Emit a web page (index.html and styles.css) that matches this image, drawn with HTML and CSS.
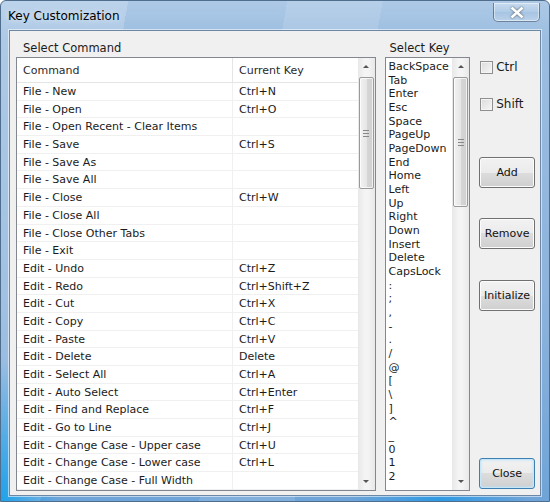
FILE: index.html
```html
<!DOCTYPE html>
<html>
<head>
<meta charset="utf-8">
<link rel="stylesheet" href="styles.css">
</head>
<body>
<div class="window">
  <div class="titlebar">
    <span class="title">Key Customization</span>
    <div class="closebtn">
      <svg width="14" height="11" viewBox="0 0 14 11"><path d="M2.5 1.5 L11.5 9.5 M11.5 1.5 L2.5 9.5" stroke="#fff" stroke-width="2.6" stroke-linecap="square"/></svg>
    </div>
  </div>
  <div class="client">
    <div class="cmd-col">
      <div class="label cmd-label">Select Command</div>
      <div class="listview">
        <div class="lv-body">
          <div class="lv-row lv-head"><div class="c1">Command</div><div class="c2">Current Key</div></div>
          <div class="lv-row"><div class="c1">File - New</div><div class="c2">Ctrl+N</div></div>
          <div class="lv-row"><div class="c1">File - Open</div><div class="c2">Ctrl+O</div></div>
          <div class="lv-row"><div class="c1">File - Open Recent - Clear Items</div><div class="c2"></div></div>
          <div class="lv-row"><div class="c1">File - Save</div><div class="c2">Ctrl+S</div></div>
          <div class="lv-row"><div class="c1">File - Save As</div><div class="c2"></div></div>
          <div class="lv-row"><div class="c1">File - Save All</div><div class="c2"></div></div>
          <div class="lv-row"><div class="c1">File - Close</div><div class="c2">Ctrl+W</div></div>
          <div class="lv-row"><div class="c1">File - Close All</div><div class="c2"></div></div>
          <div class="lv-row"><div class="c1">File - Close Other Tabs</div><div class="c2"></div></div>
          <div class="lv-row"><div class="c1">File - Exit</div><div class="c2"></div></div>
          <div class="lv-row"><div class="c1">Edit - Undo</div><div class="c2">Ctrl+Z</div></div>
          <div class="lv-row"><div class="c1">Edit - Redo</div><div class="c2">Ctrl+Shift+Z</div></div>
          <div class="lv-row"><div class="c1">Edit - Cut</div><div class="c2">Ctrl+X</div></div>
          <div class="lv-row"><div class="c1">Edit - Copy</div><div class="c2">Ctrl+C</div></div>
          <div class="lv-row"><div class="c1">Edit - Paste</div><div class="c2">Ctrl+V</div></div>
          <div class="lv-row"><div class="c1">Edit - Delete</div><div class="c2">Delete</div></div>
          <div class="lv-row"><div class="c1">Edit - Select All</div><div class="c2">Ctrl+A</div></div>
          <div class="lv-row"><div class="c1">Edit - Auto Select</div><div class="c2">Ctrl+Enter</div></div>
          <div class="lv-row"><div class="c1">Edit - Find and Replace</div><div class="c2">Ctrl+F</div></div>
          <div class="lv-row"><div class="c1">Edit - Go to Line</div><div class="c2">Ctrl+J</div></div>
          <div class="lv-row"><div class="c1">Edit - Change Case - Upper case</div><div class="c2">Ctrl+U</div></div>
          <div class="lv-row"><div class="c1">Edit - Change Case - Lower case</div><div class="c2">Ctrl+L</div></div>
          <div class="lv-row"><div class="c1">Edit - Change Case - Full Width</div><div class="c2"></div></div>
        </div>
        <div class="vscroll">
          <div class="arrow up"></div>
          <div class="track">
            <div class="thumb thumb-cmd"><span class="grip"></span></div>
          </div>
          <div class="arrow down"></div>
        </div>
      </div>
    </div>
    <div class="key-col">
      <div class="label key-label">Select Key</div>
      <div class="listbox">
        <div class="lb-body">
          <div>BackSpace</div><div>Tab</div><div>Enter</div><div>Esc</div><div>Space</div>
          <div>PageUp</div><div>PageDown</div><div>End</div><div>Home</div><div>Left</div>
          <div>Up</div><div>Right</div><div>Down</div><div>Insert</div><div>Delete</div>
          <div>CapsLock</div><div>:</div><div>;</div><div>,</div><div>-</div>
          <div>.</div><div>/</div><div>@</div><div>[</div><div>\</div>
          <div>]</div><div>^</div><div>_</div><div>0</div><div>1</div><div>2</div>
        </div>
        <div class="vscroll">
          <div class="arrow up"></div>
          <div class="track">
            <div class="thumb thumb-key"><span class="grip"></span></div>
          </div>
          <div class="arrow down"></div>
        </div>
      </div>
    </div>
    <div class="opt-col">
      <label class="check check-ctrl"><span class="box"></span><span>Ctrl</span></label>
      <label class="check check-shift"><span class="box"></span><span>Shift</span></label>
      <div class="btn btn-add">Add</div>
      <div class="btn btn-remove">Remove</div>
      <div class="btn btn-init">Initialize</div>
      <div class="btn btn-close">Close</div>
    </div>
  </div>
</div>
</body>
</html>
```

FILE: styles.css
```css
* { box-sizing: border-box; }
html, body { margin: 0; padding: 0; }
body {
  width: 550px;
  height: 502px;
  overflow: hidden;
  font-family: "DejaVu Sans", "Liberation Sans", sans-serif;
  font-size: 11px;
  color: #1b1b1b;
  background: #ffffff;
}
.window {
  width: 550px;
  height: 502px;
  display: flex;
  flex-direction: column;
  padding: 0 8px 10px 8px;
  border: 1px solid #4f6d8c;
  border-radius: 6px 6px 0 0;
  background:
    radial-gradient(ellipse 60px 140px at 0% 100%, rgba(20,160,235,0.9), rgba(20,160,235,0) 100%),
    radial-gradient(ellipse 90px 70px at 80% 100%, rgba(30,150,230,0.8), rgba(30,150,230,0) 100%),
    linear-gradient(100deg, rgba(255,255,255,0.18) 0 20%, rgba(255,255,255,0) 20% 45%, rgba(255,255,255,0.12) 45% 60%, rgba(255,255,255,0) 60%),
    linear-gradient(to bottom, #adc9e6 0%, #9bbde0 8%, #8db3dc 60%, #6fa4d8 100%);
}
.titlebar {
  height: 29px;
  flex: none;
  display: flex;
  align-items: flex-start;
  justify-content: space-between;
}
.title {
  margin-top: 8px;
  margin-left: -1px;
  font-size: 12px;
  color: #000;
  text-shadow: 0 0 6px rgba(255,255,255,0.9);
}
.closebtn {
  width: 47px;
  height: 19px;
  margin-top: 2px;
  margin-right: 1px;
  border: 1px solid rgba(40,60,90,0.55);
  border-top: none;
  border-radius: 0 0 5px 5px;
  box-shadow: inset 0 0 0 1px rgba(255,255,255,0.45);
  background: linear-gradient(to bottom, rgba(255,255,255,0.35), rgba(255,255,255,0.1) 50%, rgba(160,190,220,0.2) 51%, rgba(255,255,255,0.25));
  display: flex;
  align-items: center;
  justify-content: center;
}
.closebtn svg { filter: drop-shadow(0 0 1px rgba(0,0,0,0.6)); }

.client {
  flex: 1;
  display: flex;
  background: #f0f0f0;
  border: 1px solid #6d87a4;
  box-shadow: 0 0 0 1px rgba(255,255,255,0.55);
  padding: 8px 5px 4px 6px;
}
.label {
  height: 17px;
  padding-top: 1px;
  line-height: 16px;
  font-size: 11.5px;
  margin-bottom: 1px;
}
.cmd-col { width: 361px; display: flex; flex-direction: column; }
.cmd-label { padding-left: 7px; }
.key-col { width: 86px; margin-left: 9px; display: flex; flex-direction: column; }
.key-label { padding-left: 5px; }

.listview, .listbox {
  flex: 1;
  display: flex;
  background: #fff;
  border: 1px solid #828790;
  overflow: hidden;
  min-height: 0;
}
.lv-body { flex: 1; overflow: hidden; }
.lv-row {
  display: grid;
  grid-template-columns: 216px 1fr;
  height: 17.7px;
  line-height: 17.7px;
  border-bottom: 1px solid #f0f0f0;
  white-space: nowrap;
}
.lv-row .c1 { padding-left: 6px; border-right: 1px solid #f0f0f0; overflow: hidden; }
.lv-row .c2 { padding-left: 6px; }
.lv-head {
  height: 25px;
  line-height: 26px;
  border-bottom: 1px solid #e5e5e5;
  color: #2a2a2a;
}
.lv-head .c1 { border-right: 1px solid #e5e5e5; }

.lb-body {
  flex: 1;
  overflow: hidden;
  padding: 2px 0 0 3px;
  font-size: 11px;
  line-height: 13.67px;
  white-space: nowrap;
}

.vscroll {
  width: 17px;
  flex: none;
  display: flex;
  flex-direction: column;
  background: linear-gradient(to right, #e8e8e8, #f4f4f4 40%, #f4f4f4 60%, #e8e8e8);
}
.arrow {
  height: 17px;
  flex: none;
  display: flex;
  align-items: center;
  justify-content: center;
}
.arrow::before {
  content: "";
  width: 0; height: 0;
  border-left: 3px solid transparent;
  border-right: 3px solid transparent;
}
.arrow.up::before { border-bottom: 3px solid #555; }
.arrow.down::before { border-top: 3px solid #555; }
.track { flex: 1; padding: 0 1px; }
.thumb {
  border: 1px solid #9a9a9a;
  border-radius: 2px;
  background: linear-gradient(to right, #f2f2f2, #e6e6e6 50%, #d6d6d6 51%, #d0d0d0);
  box-shadow: inset 0 0 0 1px rgba(255,255,255,0.7);
  display: flex;
  align-items: center;
  justify-content: center;
}
.thumb-cmd { height: 112px; margin-top: 2px; }
.thumb-key { height: 130px; margin-top: 2px; }
.grip {
  width: 6px;
  height: 7px;
  border-top: 1px solid #888;
  border-bottom: 1px solid #888;
  background: linear-gradient(#888, #888) center / 6px 1px no-repeat;
}

.opt-col {
  width: 56px;
  margin-left: 9px;
  display: flex;
  flex-direction: column;
  align-items: stretch;
}
.check {
  display: flex;
  align-items: center;
  height: 16px;
  font-size: 12px;
  padding-left: 1px;
}
.check-ctrl { margin-top: 20px; }
.check-shift { margin-top: 21px; }
.check .box {
  width: 13px;
  height: 13px;
  border: 1px solid #8f8f8f;
  background: linear-gradient(135deg, #dcdcdc, #f6f6f6);
  box-shadow: inset 0 0 0 1px #f4f4f4;
  margin-right: 3px;
}
.btn {
  height: 31px;
  border: 1px solid #707070;
  border-radius: 3px;
  background: linear-gradient(to bottom, #f2f2f2 0%, #ebebeb 50%, #dddddd 50%, #cfcfcf 100%);
  box-shadow: inset 0 0 0 1px #fcfcfc;
  display: flex;
  align-items: center;
  justify-content: center;
  font-size: 11px;
  color: #111;
}
.btn-add { margin-top: 45px; }
.btn-remove { margin-top: 30px; }
.btn-init { margin-top: 31px; }
.btn-close {
  margin-top: auto;
  margin-bottom: 2px;
  border-color: #3c7fb1;
  box-shadow: inset 0 0 0 1px #c7e6f7, inset 0 0 3px 1px #bfe3f7;
}
```
